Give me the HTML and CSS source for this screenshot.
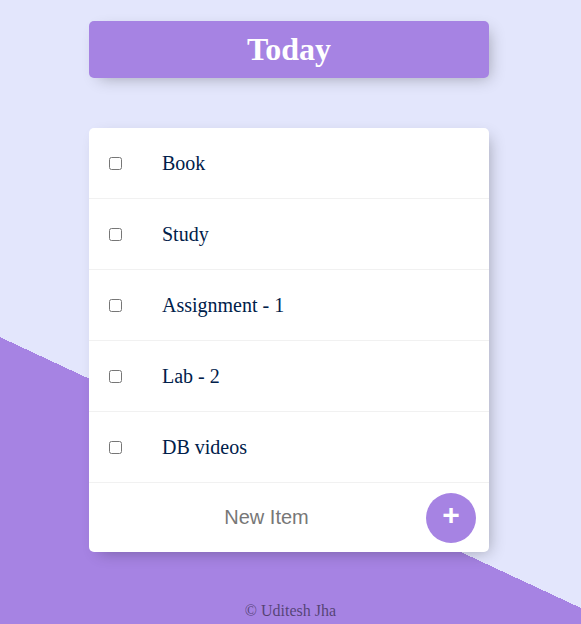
FILE: index.html
```html
<!DOCTYPE html>
<html lang="en">
<head>
<meta charset="utf-8">
<title>To-Do List</title>
<link rel="stylesheet" href="styles.css">
</head>
<body>
  <div class="box heading">
    <h1 class="title">Today</h1>
  </div>
  <div class="box list">
    <div class="item"><input type="checkbox" class="check"><p class="text">Book</p></div>
    <div class="item"><input type="checkbox" class="check"><p class="text">Study</p></div>
    <div class="item"><input type="checkbox" class="check"><p class="text">Assignment - 1</p></div>
    <div class="item"><input type="checkbox" class="check"><p class="text">Lab - 2</p></div>
    <div class="item"><input type="checkbox" class="check"><p class="text">DB videos</p></div>
    <form class="item new-form">
      <input type="text" class="new-input" placeholder="New Item" autocomplete="off">
      <button type="button" class="add-btn">+</button>
    </form>
  </div>
  <footer class="footer">© Uditesh Jha</footer>
</body>
</html>
```

FILE: styles.css
```css
html {
  height: 100%;
  background: linear-gradient(25deg, #A683E3 260px, #E3E6FC 260px) fixed;
}

body {
  margin: 0;
  padding-top: 21px;
  font-family: "Liberation Serif", "Times New Roman", serif;
  overflow: hidden;
}

.box {
  width: 400px;
  margin: 0 auto 50px 89px;
  background: #fff;
  border-radius: 5px;
  box-shadow: 5px 5px 15px -5px rgba(0, 0, 0, 0.3);
}

.heading {
  background: #A683E3;
  text-align: center;
}

.title {
  margin: 0;
  padding: 10px 10px 11px;
  color: #fff;
  font-size: 32px;
  font-weight: bold;
  line-height: 36px;
}

.item {
  min-height: 70px;
  display: flex;
  align-items: center;
  border-bottom: 1px solid #F1F1F1;
}

.check {
  margin: 20px;
  width: 13px;
  height: 13px;
}

.text {
  margin: 0;
  padding: 20px;
  font-size: 20px;
  font-weight: 200;
  color: #00204a;
}

.new-form {
  border-bottom: none;
  margin: 0 0 0 20px;
  height: 69px;
  min-height: 69px;
}

.new-input {
  text-align: center;
  height: 60px;
  width: 315px;
  border: none;
  padding: 1px 2px;
  font-family: "Liberation Sans", Arial, sans-serif;
  font-size: 20px;
  font-weight: 200;
  outline: none;
  box-sizing: border-box;
  margin-right: 2px;
}

.new-input::placeholder {
  color: #777;
}

.add-btn {
  width: 50px;
  height: 50px;
  border-radius: 50%;
  border: none;
  background: #A683E3;
  color: #fff;
  font-family: "Liberation Sans", Arial, sans-serif;
  font-size: 30px;
  font-weight: bold;
  line-height: 1;
  padding: 0 0 6px;
  flex: none;
}

.footer {
  text-align: center;
  color: rgba(0, 0, 0, 0.5);
  font-size: 16px;
  margin-top: 2px;
}
```
